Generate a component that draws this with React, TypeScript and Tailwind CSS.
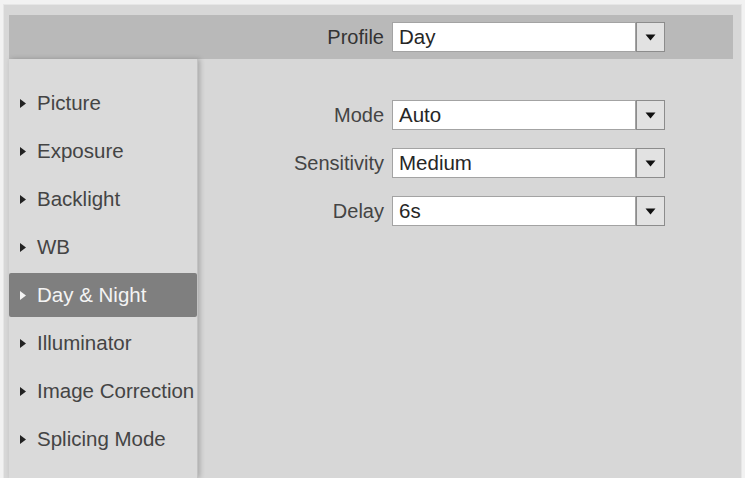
import { useState } from "react";

const items = [
  "Picture",
  "Exposure",
  "Backlight",
  "WB",
  "Day & Night",
  "Illuminator",
  "Image Correction",
  "Splicing Mode",
];

const Select = ({ value }: { value: string }) => (
  <div className="flex h-[30px] w-[273px]">
    <div className="flex-1 bg-white border border-[#a3a3a3] pl-[6px] flex items-center text-[20.5px] text-[#262626] leading-none">
      {value}
    </div>
    <div className="w-[29px] bg-[#e2e2e2] border border-[#8c8c8c] flex items-center justify-center">
      <svg width="11" height="7" viewBox="0 0 11 7">
        <path d="M0.5 0.5 H10.5 L5.5 6.5 Z" fill="#111" />
      </svg>
    </div>
  </div>
);

const Row = ({ label, value }: { label: string; value: string }) => (
  <div className="flex items-center">
    <div className="w-[187px] text-right text-[20px] text-[#444] leading-none pr-2">{label}</div>
    <Select value={value} />
  </div>
);

const App = () => {
  const [active, setActive] = useState("Day & Night");

  return (
    <div
      className="w-[745px] h-[478px] bg-[#f2f2f2] pt-[4px] pl-[3px] pr-[3px] overflow-hidden"
      style={{ fontFamily: '"Liberation Sans", Arial, sans-serif' }}
    >
      <div className="h-[474px] bg-[#d7d7d7] border-l border-r border-t border-[#e6e6e6] pt-[10px] px-[5px] flex flex-col">
        {/* header */}
        <div className="h-[44px] bg-[#b9b9b9] mr-[3px] flex items-center">
          <div className="w-[383px] text-right text-[20px] text-[#333] leading-none pr-2">Profile</div>
          <Select value="Day" />
        </div>

        <div className="flex flex-1">
          {/* sidebar */}
          <div className="w-[189px] bg-[#dadada] pt-[22px] shadow-[2px_0_5px_rgba(0,0,0,0.22)] border-r border-[#c2c2c2]">
            {items.map((it) => {
              const sel = it === active;
              return (
                <div
                  key={it}
                  onClick={() => setActive(it)}
                  className={`h-[44px] mb-1 flex items-center pl-[11px] rounded-[2px] cursor-pointer ${
                    sel ? "bg-[#7f7f7f] text-[#f4f4f4]" : "text-[#444]"
                  }`}
                >
                  <svg width="6" height="9" viewBox="0 0 6 9" className="mr-[11px]">
                    <path d="M0 0 L6 4.5 L0 9 Z" fill={sel ? "#f4f4f4" : "#222"} />
                  </svg>
                  <span className="text-[20.5px] leading-none whitespace-nowrap">{it}</span>
                </div>
              );
            })}
          </div>

          {/* content */}
          <div className="flex-1 pt-[41px] pl-[7px] flex flex-col gap-[18px]">
            <Row label="Mode" value="Auto" />
            <Row label="Sensitivity" value="Medium" />
            <Row label="Delay" value="6s" />
          </div>
        </div>
      </div>
    </div>
  );
};

export default App;
